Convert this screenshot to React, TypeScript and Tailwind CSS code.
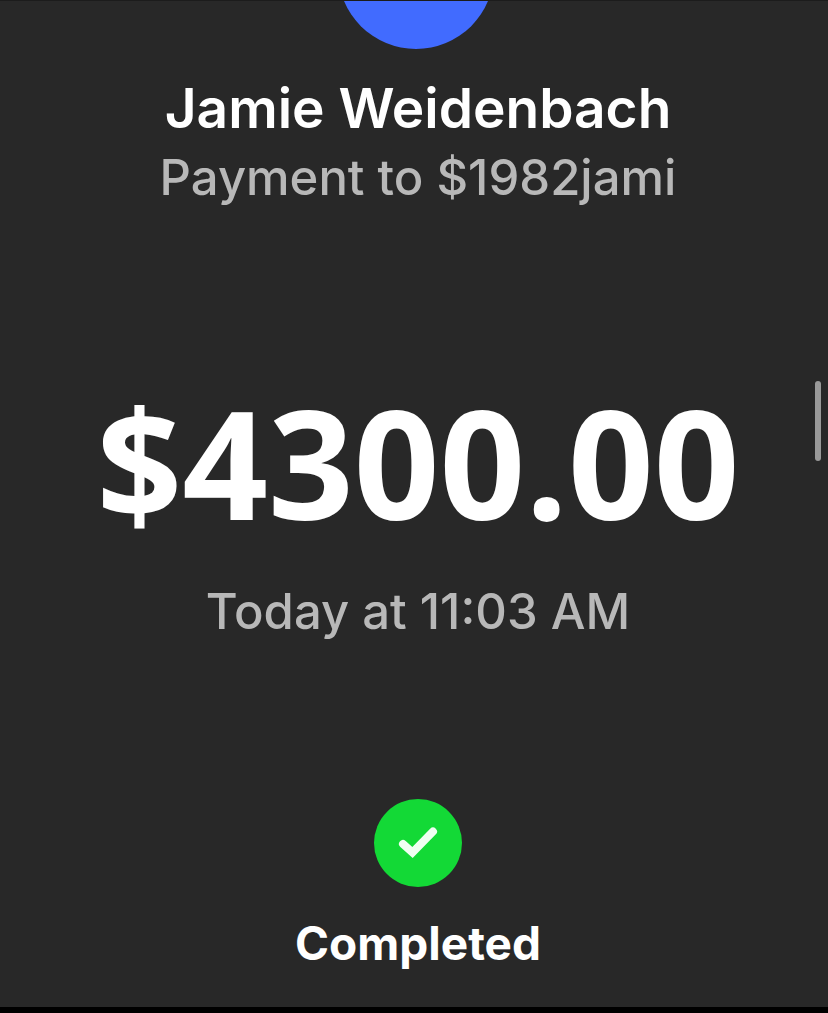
import React from 'react';

const payment = {
  name: 'Jamie Weidenbach',
  note: 'Payment to $1982jami',
  amount: '$4300.00',
  time: 'Today at 11:03 AM',
  status: 'Completed',
};

const StatusIcon: React.FC = () => (
  <svg viewBox="0 0 88 88" className="w-[88px] h-[88px]" aria-hidden="true">
    <circle cx="44" cy="44" r="44" fill="#13d936" />
    <path
      d="M29 45 L38.5 53.5 L59 32.5"
      fill="none"
      stroke="#f0fff2"
      strokeWidth="8"
      strokeLinecap="round"
    />
  </svg>
);

const App: React.FC = () => {
  return (
    <div className="relative min-h-screen flex flex-col bg-[#282828] border-t border-b-6 border-t-[#1c1c1c] border-b-black font-['Inter',sans-serif] text-white text-center whitespace-nowrap overflow-hidden">
      {/* Avatar, scrolled mostly out of view */}
      <div className="h-12 pl-1 flex justify-center items-end overflow-hidden">
        <div className="w-[156px] h-[156px] shrink-0 rounded-full bg-[#416bff]" />
      </div>

      <header className="pt-6 pl-2">
        <h1 className="text-[55px] leading-[70px] font-semibold">{payment.name}</h1>
        <p className="text-[49px] leading-[70px] font-medium text-[#b8b8b8]">{payment.note}</p>
      </header>

      <main className="pt-[147px] pl-2">
        <p className="font-['Open_Sans',sans-serif] text-[150px] leading-[204px] font-bold">
          {payment.amount}
        </p>
        <p className="pt-3 text-[49px] leading-[72px] font-medium text-[#b8b8b8]">{payment.time}</p>
      </main>

      <footer className="pt-[151px] pl-2 flex flex-col items-center gap-5">
        <StatusIcon />
        <p className="text-[46px] leading-[72px] font-bold">{payment.status}</p>
      </footer>

      {/* Scroll thumb */}
      <div className="absolute right-[7px] top-[380px] w-[6px] h-20 rounded-full bg-[#999999]" />
    </div>
  );
};

export default App;
